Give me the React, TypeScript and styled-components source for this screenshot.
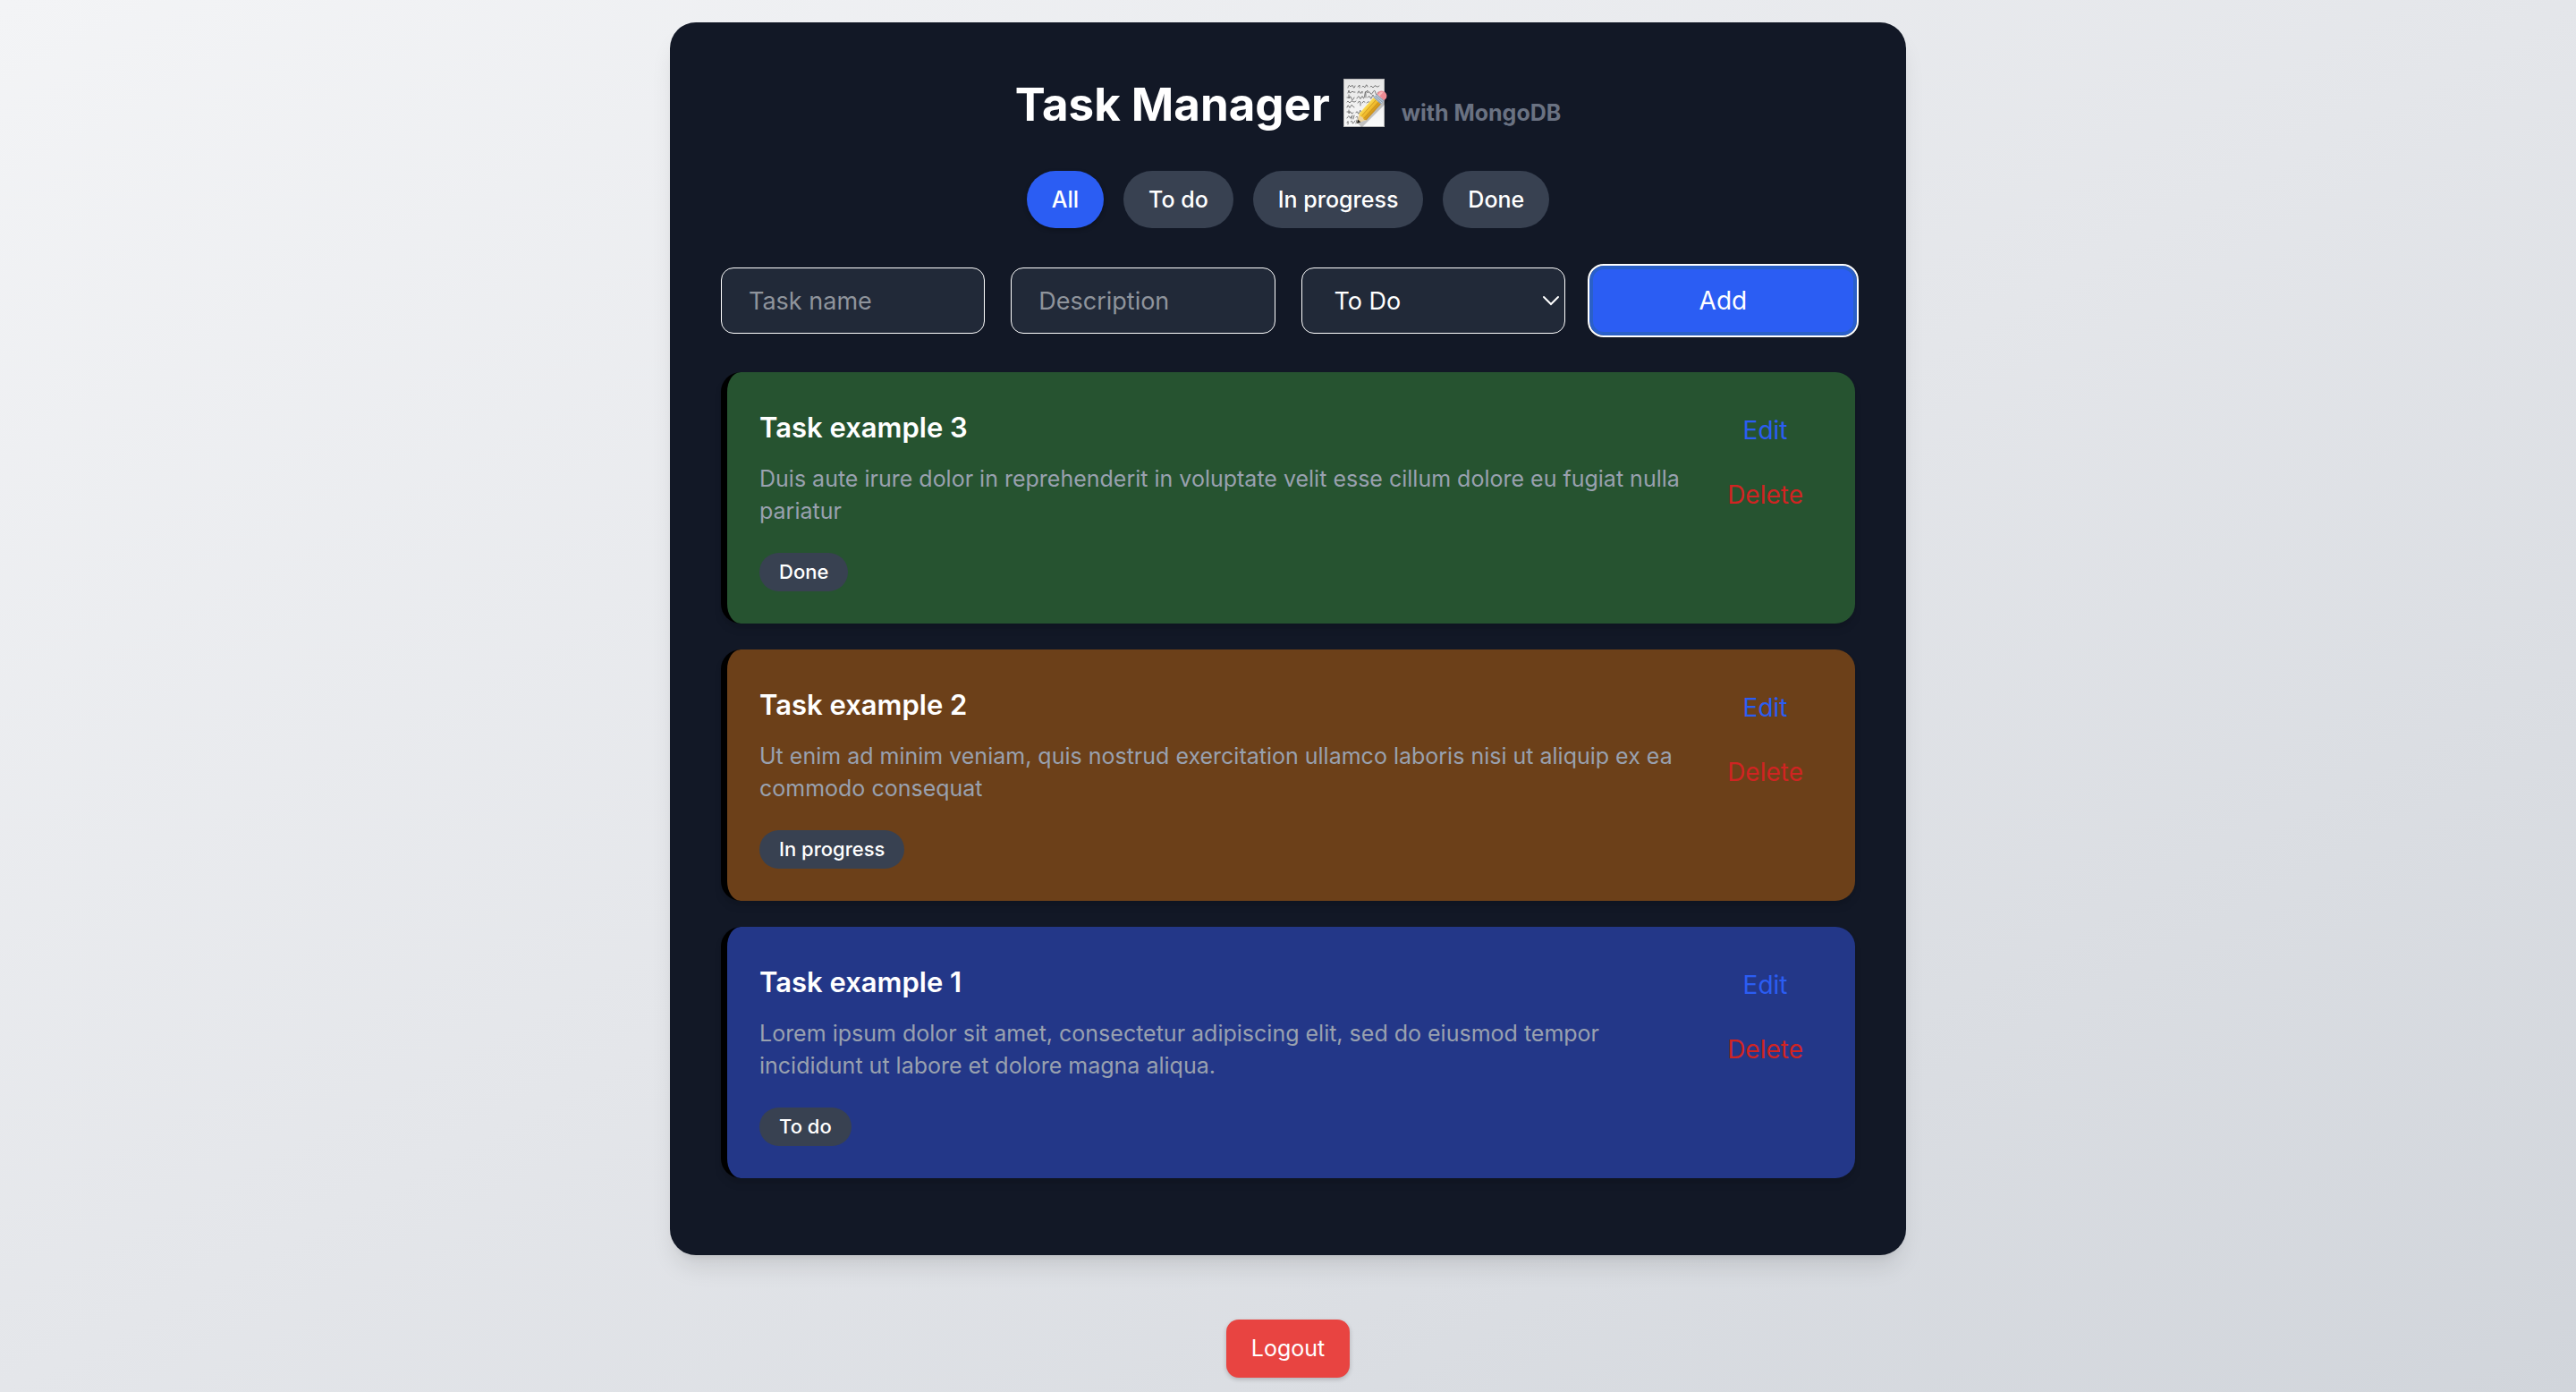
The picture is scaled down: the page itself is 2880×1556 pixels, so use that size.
import React, { useState } from "react";
import styled, { createGlobalStyle } from "styled-components";

type Status = "todo" | "progress" | "done";

interface Task {
  id: number;
  title: string;
  description: string;
  status: Status;
}

const statusLabel: Record<Status, string> = {
  todo: "To do",
  progress: "In progress",
  done: "Done",
};

const statusColor: Record<Status, string> = {
  todo: "#233788",
  progress: "#6c4019",
  done: "#265330",
};

const tasks: Task[] = [
  {
    id: 3,
    title: "Task example 3",
    description:
      "Duis aute irure dolor in reprehenderit in voluptate velit esse cillum dolore eu fugiat nulla pariatur",
    status: "done",
  },
  {
    id: 2,
    title: "Task example 2",
    description:
      "Ut enim ad minim veniam, quis nostrud exercitation ullamco laboris nisi ut aliquip ex ea commodo consequat",
    status: "progress",
  },
  {
    id: 1,
    title: "Task example 1",
    description:
      "Lorem ipsum dolor sit amet, consectetur adipiscing elit, sed do eiusmod tempor incididunt ut labore et dolore magna aliqua.",
    status: "todo",
  },
];

const GlobalStyle = createGlobalStyle`
  *, *::before, *::after { box-sizing: border-box; }
  body {
    margin: 0;
    font-family: Inter, "Noto Sans", "Liberation Sans", sans-serif;
    font-size: 28px;
    line-height: 43px;
    color: #fff;
  }
  h1, h2, p, ul { margin: 0; padding: 0; }
  button, input, select { font: inherit; margin: 0; }
  button { border: 0; cursor: pointer; }
`;

const Page = styled.div`
  min-height: 100vh;
  display: flex;
  flex-direction: column;
  align-items: center;
  gap: 72px;
  padding: 25px 29px 16px;
  background: linear-gradient(to bottom right, #f3f4f6, #e4e6ea 50%, #d1d5db);
`;

const Panel = styled.main`
  width: 100%;
  max-width: 1382px;
  padding: 57px 57px 86px;
  border-radius: 29px;
  background: #121826;
  box-shadow: 0 18px 27px -5px rgba(0, 0, 0, 0.1), 0 7px 11px -7px rgba(0, 0, 0, 0.1);
`;

const Heading = styled.h1`
  display: flex;
  justify-content: center;
  align-items: baseline;
  gap: 13px;
  margin-bottom: 40px;
  font-size: 51px;
  line-height: 69px;
  font-weight: 700;
`;

const MemoIcon = styled.svg`
  width: 54px;
  height: 62px;
  align-self: flex-start;
`;

const Subtitle = styled.small`
  font-size: 25px;
  line-height: 36px;
  color: #6a7282;
`;

const Filters = styled.div`
  display: flex;
  justify-content: center;
  gap: 22px;
  margin-bottom: 44px;
`;

const FilterButton = styled.button<{ $active: boolean }>`
  padding: 14px 28px;
  border-radius: 32px;
  font-size: 25px;
  line-height: 36px;
  font-weight: 500;
  color: #fff;
  background: ${(p) => (p.$active ? "#2b5df3" : "#384151")};
  box-shadow: ${(p) => (p.$active ? "0 2px 5px rgba(0, 0, 0, 0.3)" : "none")};
`;

const Form = styled.form`
  display: grid;
  grid-template-columns: repeat(4, 1fr);
  gap: 29px;
  margin-bottom: 43px;
`;

const TextField = styled.input`
  width: 100%;
  min-width: 0;
  height: 74px;
  padding: 0 30px;
  border: 1px solid #fff;
  border-radius: 14px;
  font-size: 27px;
  color: #fff;
  background: #212938;
  &::placeholder { color: #8f949c; opacity: 1; }
`;

const SelectBox = styled.div`
  position: relative;
  display: grid;
`;

const StatusSelect = styled.select`
  appearance: none;
  width: 100%;
  height: 74px;
  padding: 0 36px;
  border: 1px solid #fff;
  border-radius: 14px;
  font-size: 27px;
  color: #fff;
  background: #212938;
`;

const Chevron = styled.svg`
  position: absolute;
  right: 6px;
  top: 50%;
  width: 20px;
  height: 12px;
  margin-top: -6px;
  pointer-events: none;
`;

const AddButton = styled.button`
  height: 74px;
  border-radius: 14px;
  color: #fff;
  background: #2b5df3;
  box-shadow: inset 0 0 0 2px #2a60c8, 0 0 0 2px #2a60c8;
  outline: 2px solid #fff;
  outline-offset: 2px;
`;

const TaskList = styled.ul`
  display: grid;
  gap: 29px;
  list-style: none;
`;

const TaskCard = styled.li<{ $color: string }>`
  display: flex;
  align-items: flex-start;
  gap: 22px;
  padding: 36px;
  border-left: 7px solid #000;
  border-radius: 22px;
  background: ${(p) => p.$color};
  box-shadow: 0 7px 11px -2px rgba(0, 0, 0, 0.1), 0 4px 7px -4px rgba(0, 0, 0, 0.1);
`;

const TaskBody = styled.div`
  flex: 1;
  min-width: 0;
`;

const TaskTitle = styled.h2`
  font-size: 31px;
  line-height: 52px;
  font-weight: 600;
`;

const TaskText = styled.p`
  margin-top: 13px;
  font-size: 25px;
  line-height: 36px;
  color: #99a1af;
`;

const Badge = styled.span`
  display: block;
  width: fit-content;
  margin-top: 29px;
  padding: 7px 22px;
  border-radius: 22px;
  font-size: 22px;
  line-height: 29px;
  font-weight: 500;
  background: #384151;
`;

const TaskActions = styled.div`
  display: flex;
  flex-direction: column;
  gap: 14px;
`;

const ActionButton = styled.button<{ $color: string }>`
  padding: 7px 22px;
  line-height: 44px;
  background: transparent;
  color: ${(p) => p.$color};
`;

const LogoutButton = styled.button`
  padding: 14px 28px;
  border-radius: 14px;
  font-size: 25px;
  line-height: 37px;
  color: #fff;
  background: #e84441;
  box-shadow: 0 2px 5px rgba(0, 0, 0, 0.2);
`;

function Memo() {
  return (
    <MemoIcon viewBox="0 -4 54 62" role="img" aria-label="Memo">
      <defs>
        <linearGradient id="paper" x1="0" y1="0" x2="0" y2="1">
          <stop offset="0" stopColor="#e6e6e6" />
          <stop offset="1" stopColor="#fafafa" />
        </linearGradient>
        <linearGradient id="wood" x1="0" y1="0" x2="0" y2="1">
          <stop offset="0" stopColor="#fbdc55" />
          <stop offset="0.5" stopColor="#f2bd2c" />
          <stop offset="1" stopColor="#c98c17" />
        </linearGradient>
      </defs>
      <rect x="2.5" y="2.5" width="45" height="53" fill="url(#paper)" stroke="#b9b9b9" />
      <g fill="none" stroke="#5a5a5a" strokeWidth="0.8" strokeLinecap="round" strokeLinejoin="round">
        <path d="M7 12q1-4 2-2t2 0 2 1 2-1M18 11l2-2v3M23 11q1-2 2 0t2-1 2 1M32 11q1-2 2 0t2 0 2-1 2 1 2-1" />
        <path d="M7 18l1-3 1 3 2-1q1-2 2 0l2 0M18 18q1-4 2-1t3-1v2M27 17l2-2v3q2-3 3 0t3-1 3 1 3-1" />
        <path d="M6 23h3M8 20v4q2-4 3 0t3-1M17 24q2-4 3-1t2 0 2 0 2-4 1 4M29 23q2-3 3 0t2-1 2 0" />
        <path d="M6 28q1-2 2 0t2 0 2-1 2 1 2-1M18 29q1-3 3-1v4M23 29q1-3 3-1M28 29q1-2 3-1" />
        <path d="M6 34q1-4 2-1t2 0 2-1 2 2" />
        <path d="M6 39h3M8 37v4q2-4 3 0l2-1M16 40q1-3 2 0t2-1 2 1" />
        <path d="M6 46q2-4 3-1t2-1M12 43l-1 4M14 43l-1 4M16 45q2-2 2 1t3-1" />
        <path d="M6 51q2-4 1 2M10 50q2-2 2 1t3-2M17 48l-1 4" />
      </g>
      <path d="M20 54L50 24" stroke="#000" strokeOpacity="0.22" strokeWidth="7" />
      <g transform="translate(17 52) rotate(-48)">
        <path d="M0 0L10-5.5V5.5Z" fill="#ecd29c" />
        <path d="M0 0L4-2.2V2.2Z" fill="#262626" />
        <path d="M10-5.5H34V5.5H10L8.500 3 9.500 0 8.500-3Z" fill="url(#wood)" />
        <path d="M10-1.700H34M10 2.200H34" stroke="#b77e15" strokeWidth="0.6" />
        <rect x="34" y="-5.500" width="5.500" height="11" fill="#8fa4b8" />
        <path d="M35.800-5.500V5.500M37.800-5.500V5.500" stroke="#d9e2ea" strokeWidth="0.7" />
        <path d="M39.500-5.500H43Q47-4 47 0T43 5.500H39.500Z" fill="#ee8a92" />
        <path d="M39.500-4H43Q45-3.500 45.500-1.500H39.500Z" fill="#f8b4b6" />
      </g>
    </MemoIcon>
  );
}

const filters = ["All", "To do", "In progress", "Done"];

export default function App() {
  const [filter, setFilter] = useState("All");
  const shown = tasks.filter((t) => filter === "All" || statusLabel[t.status] === filter);

  return (
    <>
      <GlobalStyle />
      <Page>
        <Panel>
          <Heading>
            Task Manager
            <Memo />
            <Subtitle>with MongoDB</Subtitle>
          </Heading>
          <Filters>
            {filters.map((name) => (
              <FilterButton key={name} type="button" $active={name === filter} onClick={() => setFilter(name)}>
                {name}
              </FilterButton>
            ))}
          </Filters>
          <Form onSubmit={(e: React.FormEvent) => e.preventDefault()}>
            <TextField type="text" placeholder="Task name" aria-label="Task name" />
            <TextField type="text" placeholder="Description" aria-label="Description" />
            <SelectBox>
              <StatusSelect aria-label="Status" defaultValue="todo">
                <option value="todo">To Do</option>
                <option value="progress">In Progress</option>
                <option value="done">Done</option>
              </StatusSelect>
              <Chevron viewBox="0 0 20 12" aria-hidden="true">
                <path d="M2 2l8 8 8-8" fill="none" stroke="#fff" strokeWidth="2" strokeLinecap="round" />
              </Chevron>
            </SelectBox>
            <AddButton type="submit">Add</AddButton>
          </Form>
          <TaskList>
            {shown.map((task) => (
              <TaskCard key={task.id} $color={statusColor[task.status]}>
                <TaskBody>
                  <TaskTitle>{task.title}</TaskTitle>
                  <TaskText>{task.description}</TaskText>
                  <Badge>{statusLabel[task.status]}</Badge>
                </TaskBody>
                <TaskActions>
                  <ActionButton type="button" $color="#2b5df3">Edit</ActionButton>
                  <ActionButton type="button" $color="#d02422">Delete</ActionButton>
                </TaskActions>
              </TaskCard>
            ))}
          </TaskList>
        </Panel>
        <LogoutButton type="button">Logout</LogoutButton>
      </Page>
    </>
  );
}
